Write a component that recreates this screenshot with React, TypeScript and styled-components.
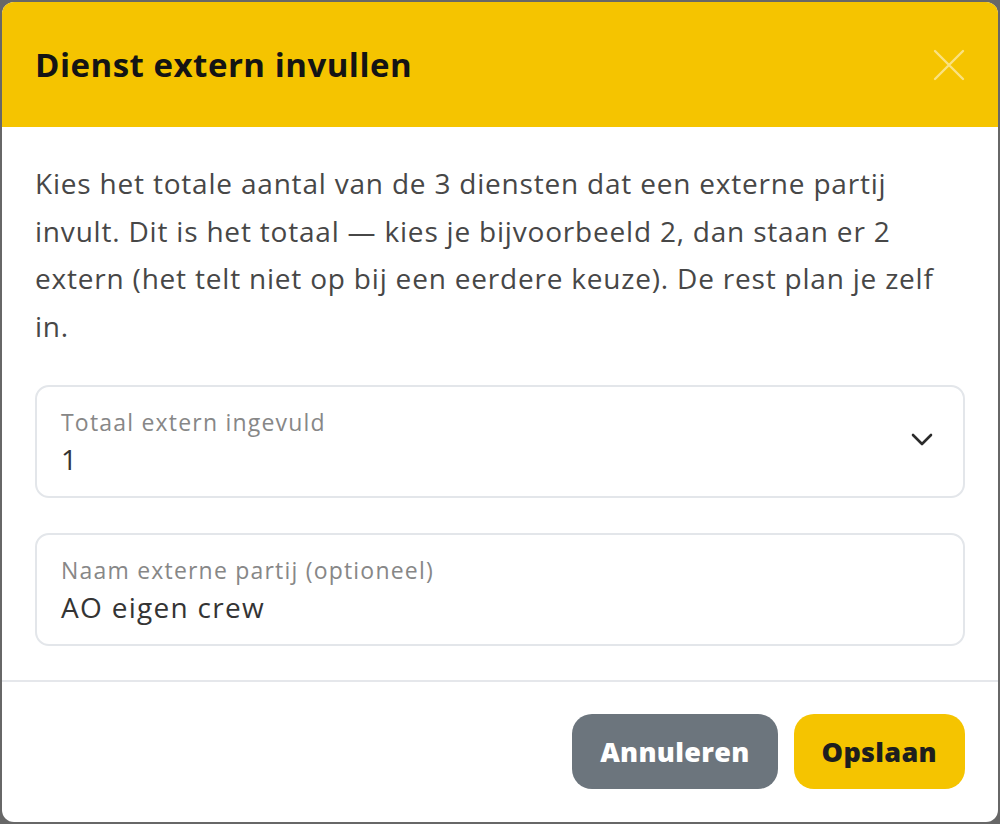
import React from "react";
import styled, { createGlobalStyle } from "styled-components";

const GlobalStyle = createGlobalStyle`
  html, body {
    margin: 0;
    padding: 0;
    background: #676767;
    font-family: "Open Sans", "Noto Sans", sans-serif;
  }
  * { box-sizing: border-box; }
`;

const Backdrop = styled.div`
  width: 1000px;
  height: 824px;
  padding: 2px;
  background: #676767;
`;

const Modal = styled.div`
  width: 100%;
  height: 100%;
  background: #ffffff;
  border-radius: 12px;
  overflow: hidden;
  display: flex;
  flex-direction: column;
`;

const Header = styled.div`
  height: 125px;
  flex-shrink: 0;
  background: #f5c400;
  display: flex;
  align-items: center;
  justify-content: space-between;
  padding: 0 32px 0 33px;
`;

const Title = styled.h2`
  margin: 0;
  font-size: 33px;
  font-weight: 700;
  color: #141414;
  letter-spacing: 0.5px;
`;

const CloseButton = styled.button`
  width: 34px;
  height: 34px;
  padding: 0;
  border: none;
  background: transparent;
  display: flex;
  align-items: center;
  justify-content: center;
  cursor: pointer;
`;

const Body = styled.div`
  padding: 33px 33px 34px 33px;
  display: flex;
  flex-direction: column;
  gap: 35px;
`;

const Intro = styled.p`
  margin: 0;
  font-size: 28px;
  line-height: 47.5px;
  color: #474747;
  letter-spacing: 0.8px;
`;

const Field = styled.div`
  position: relative;
  height: 113px;
  border: 2px solid #e3e6ea;
  border-radius: 14px;
  padding: 19px 24px 0 24px;
  display: flex;
  flex-direction: column;
`;

const FieldLabel = styled.label`
  font-size: 23px;
  line-height: 32px;
  color: #878787;
  letter-spacing: 1.2px;
`;

const FieldValue = styled.div`
  font-size: 28px;
  line-height: 42px;
  color: #343434;
  letter-spacing: 1.3px;
`;

const Chevron = styled.svg`
  position: absolute;
  right: 30px;
  top: 46px;
`;

const Divider = styled.div`
  height: 2px;
  background: #e5e7eb;
`;

const Footer = styled.div`
  flex: 1;
  display: flex;
  justify-content: flex-end;
  align-items: center;
  gap: 16px;
  padding: 0 33px 2px 0;
`;

const Button = styled.button<{ $variant: "secondary" | "primary" }>`
  height: 75px;
  padding: 0 28px;
  border: none;
  border-radius: 20px;
  font-family: inherit;
  font-size: 27px;
  font-weight: 800;
  letter-spacing: 0.3px;
  background: ${(p) => (p.$variant === "primary" ? "#f5c400" : "#6c757d")};
  color: ${(p) => (p.$variant === "primary" ? "#1e1e1e" : "#ffffff")};
  cursor: pointer;
`;

export default function App() {
  return (
    <>
      <GlobalStyle />
      <Backdrop>
        <Modal>
          <Header>
            <Title>Dienst extern invullen</Title>
            <CloseButton aria-label="Sluiten">
              <svg width="32" height="32" viewBox="0 0 32 32">
                <path
                  d="M2 2 L30 30 M30 2 L2 30"
                  stroke="rgba(255,255,255,0.5)"
                  strokeWidth="2.4"
                  strokeLinecap="round"
                />
              </svg>
            </CloseButton>
          </Header>
          <Body>
            <Intro>
              Kies het totale aantal van de 3 diensten dat een externe partij
              invult. Dit is het totaal — kies je bijvoorbeeld 2, dan staan er 2
              extern (het telt niet op bij een eerdere keuze). De rest plan je
              zelf in.
            </Intro>
            <Field>
              <FieldLabel>Totaal extern ingevuld</FieldLabel>
              <FieldValue>1</FieldValue>
              <Chevron width="22" height="14" viewBox="0 0 22 14">
                <path
                  d="M2 2 L11 11 L20 2"
                  fill="none"
                  stroke="#2b2b2b"
                  strokeWidth="2.6"
                  strokeLinecap="round"
                  strokeLinejoin="round"
                />
              </Chevron>
            </Field>
            <Field>
              <FieldLabel>Naam externe partij (optioneel)</FieldLabel>
              <FieldValue>AO eigen crew</FieldValue>
            </Field>
          </Body>
          <Divider />
          <Footer>
            <Button $variant="secondary">Annuleren</Button>
            <Button $variant="primary">Opslaan</Button>
          </Footer>
        </Modal>
      </Backdrop>
    </>
  );
}
